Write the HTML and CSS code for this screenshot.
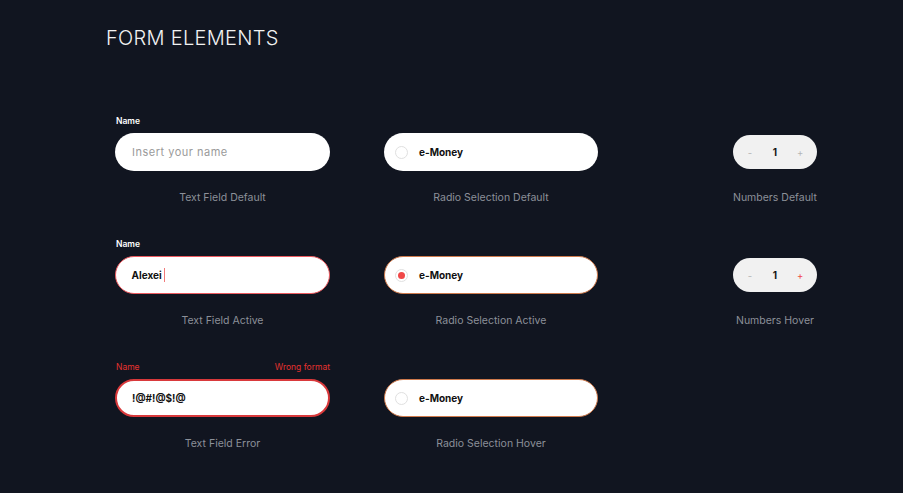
FILE: index.html
```html
<!DOCTYPE html>
<html>
<head>
<meta charset="utf-8">
<link rel="stylesheet" href="styles.css">
</head>
<body>
<div class="page">
  <h1 class="title">FORM ELEMENTS</h1>
  <div class="grid">
    <!-- Row 1 -->
    <div class="cell c1">
      <div class="label-row"><span class="label">Name</span></div>
      <div class="slot"><div class="field"><span class="placeholder">Insert your name</span></div></div>
      <div class="caption">Text Field Default</div>
    </div>
    <div class="cell c2">
      <div class="label-row"></div>
      <div class="slot"><div class="radio"><span class="dot"></span><span class="rtext">e-Money</span></div></div>
      <div class="caption">Radio Selection Default</div>
    </div>
    <div class="cell c3">
      <div class="label-row"></div>
      <div class="slot center"><div class="num"><span class="op">-</span><span class="val">1</span><span class="op">+</span></div></div>
      <div class="caption">Numbers Default</div>
    </div>
    <!-- Row 2 -->
    <div class="cell c1">
      <div class="label-row"><span class="label">Name</span></div>
      <div class="slot"><div class="field active"><span class="value">Alexei</span><span class="cursor"></span></div></div>
      <div class="caption">Text Field Active</div>
    </div>
    <div class="cell c2">
      <div class="label-row"></div>
      <div class="slot"><div class="radio hl"><span class="dot on"></span><span class="rtext">e-Money</span></div></div>
      <div class="caption">Radio Selection Active</div>
    </div>
    <div class="cell c3">
      <div class="label-row"></div>
      <div class="slot center"><div class="num"><span class="op">-</span><span class="val">1</span><span class="op red">+</span></div></div>
      <div class="caption">Numbers Hover</div>
    </div>
    <!-- Row 3 -->
    <div class="cell c1">
      <div class="label-row err"><span class="label">Name</span><span class="label">Wrong format</span></div>
      <div class="slot"><div class="field error"><span class="value">!@#!@$!@</span></div></div>
      <div class="caption">Text Field Error</div>
    </div>
    <div class="cell c2">
      <div class="label-row"></div>
      <div class="slot"><div class="radio hl"><span class="dot"></span><span class="rtext">e-Money</span></div></div>
      <div class="caption">Radio Selection Hover</div>
    </div>
    <div class="cell c3"></div>
  </div>
</div>
</body>
</html>
```

FILE: styles.css
```css
* { box-sizing: border-box; }
html, body { margin: 0; padding: 0; }
body {
  background: #111520;
  font-family: Inter, "Noto Sans", sans-serif;
  width: 903px;
  height: 493px;
  overflow: hidden;
}
.page {
  padding: 26px 0 0 0;
}
.title {
  margin: 0 0 65px 106px;
  font-size: 20px;
  line-height: 24px;
  font-weight: 300;
  letter-spacing: 0.3px;
  color: #f2f2f2;
}
.grid {
  display: grid;
  grid-template-columns: 215px 214px 246px;
  column-gap: 54px;
  row-gap: 33px;
  margin-left: 115px;
}
.cell {
  display: flex;
  flex-direction: column;
}
.label-row {
  height: 12px;
  margin-bottom: 6px;
  display: flex;
  justify-content: space-between;
  padding: 0 0 0 1px;
}
.label {
  font-size: 8.5px;
  line-height: 12px;
  font-weight: 600;
  color: #ffffff;
}
.label-row.err .label {
  color: #e5322f;
  font-weight: 400;
}
.slot {
  height: 38px;
  display: flex;
  align-items: center;
}
.slot.center { justify-content: center; }
.caption {
  margin-top: 20px;
  line-height: 14px;
  font-size: 10.5px;
  color: #8c9099;
  text-align: center;
}
.field {
  width: 215px;
  height: 38px;
  border-radius: 19px;
  background: #fff;
  display: flex;
  align-items: center;
  padding-left: 17px;
}
.field.active { border: 1.5px solid #ec5a5f; padding-left: 15.5px; }
.field.error { border: 2px solid #d9393b; padding-left: 15px; }
.placeholder {
  font-size: 11px;
  letter-spacing: 0.5px;
  color: #9a9a9a;
}
.value {
  font-size: 10px;
  font-weight: 700;
  color: #111;
}
.cursor {
  display: inline-block;
  width: 1.5px;
  height: 14px;
  background: #f07a7a;
  margin-left: 2px;
}
.radio {
  width: 214px;
  height: 38px;
  border-radius: 19px;
  background: #fff;
  display: flex;
  align-items: center;
  padding-left: 11px;
}
.radio.hl { border: 1px solid #cf7a4c; padding-left: 10px; }
.dot {
  width: 13px;
  height: 13px;
  border-radius: 50%;
  border: 1px solid #e0e0e0;
  display: flex;
  align-items: center;
  justify-content: center;
}
.dot.on::after {
  content: "";
  width: 7px;
  height: 7px;
  border-radius: 50%;
  background: #f04848;
}
.rtext {
  margin-left: 11px;
  font-size: 10px;
  font-weight: 700;
  color: #111;
}
.num {
  width: 84px;
  height: 34px;
  border-radius: 17px;
  background: #f1f1f1;
  display: flex;
  align-items: center;
  justify-content: space-between;
  padding: 0 14px 0 14px;
}
.op {
  font-size: 9.5px;
  color: #b5b5b5;
  width: 6px;
  text-align: center;
}
.op.red { color: #f04848; }
.val {
  font-size: 10px;
  font-weight: 700;
  color: #111;
}
```
